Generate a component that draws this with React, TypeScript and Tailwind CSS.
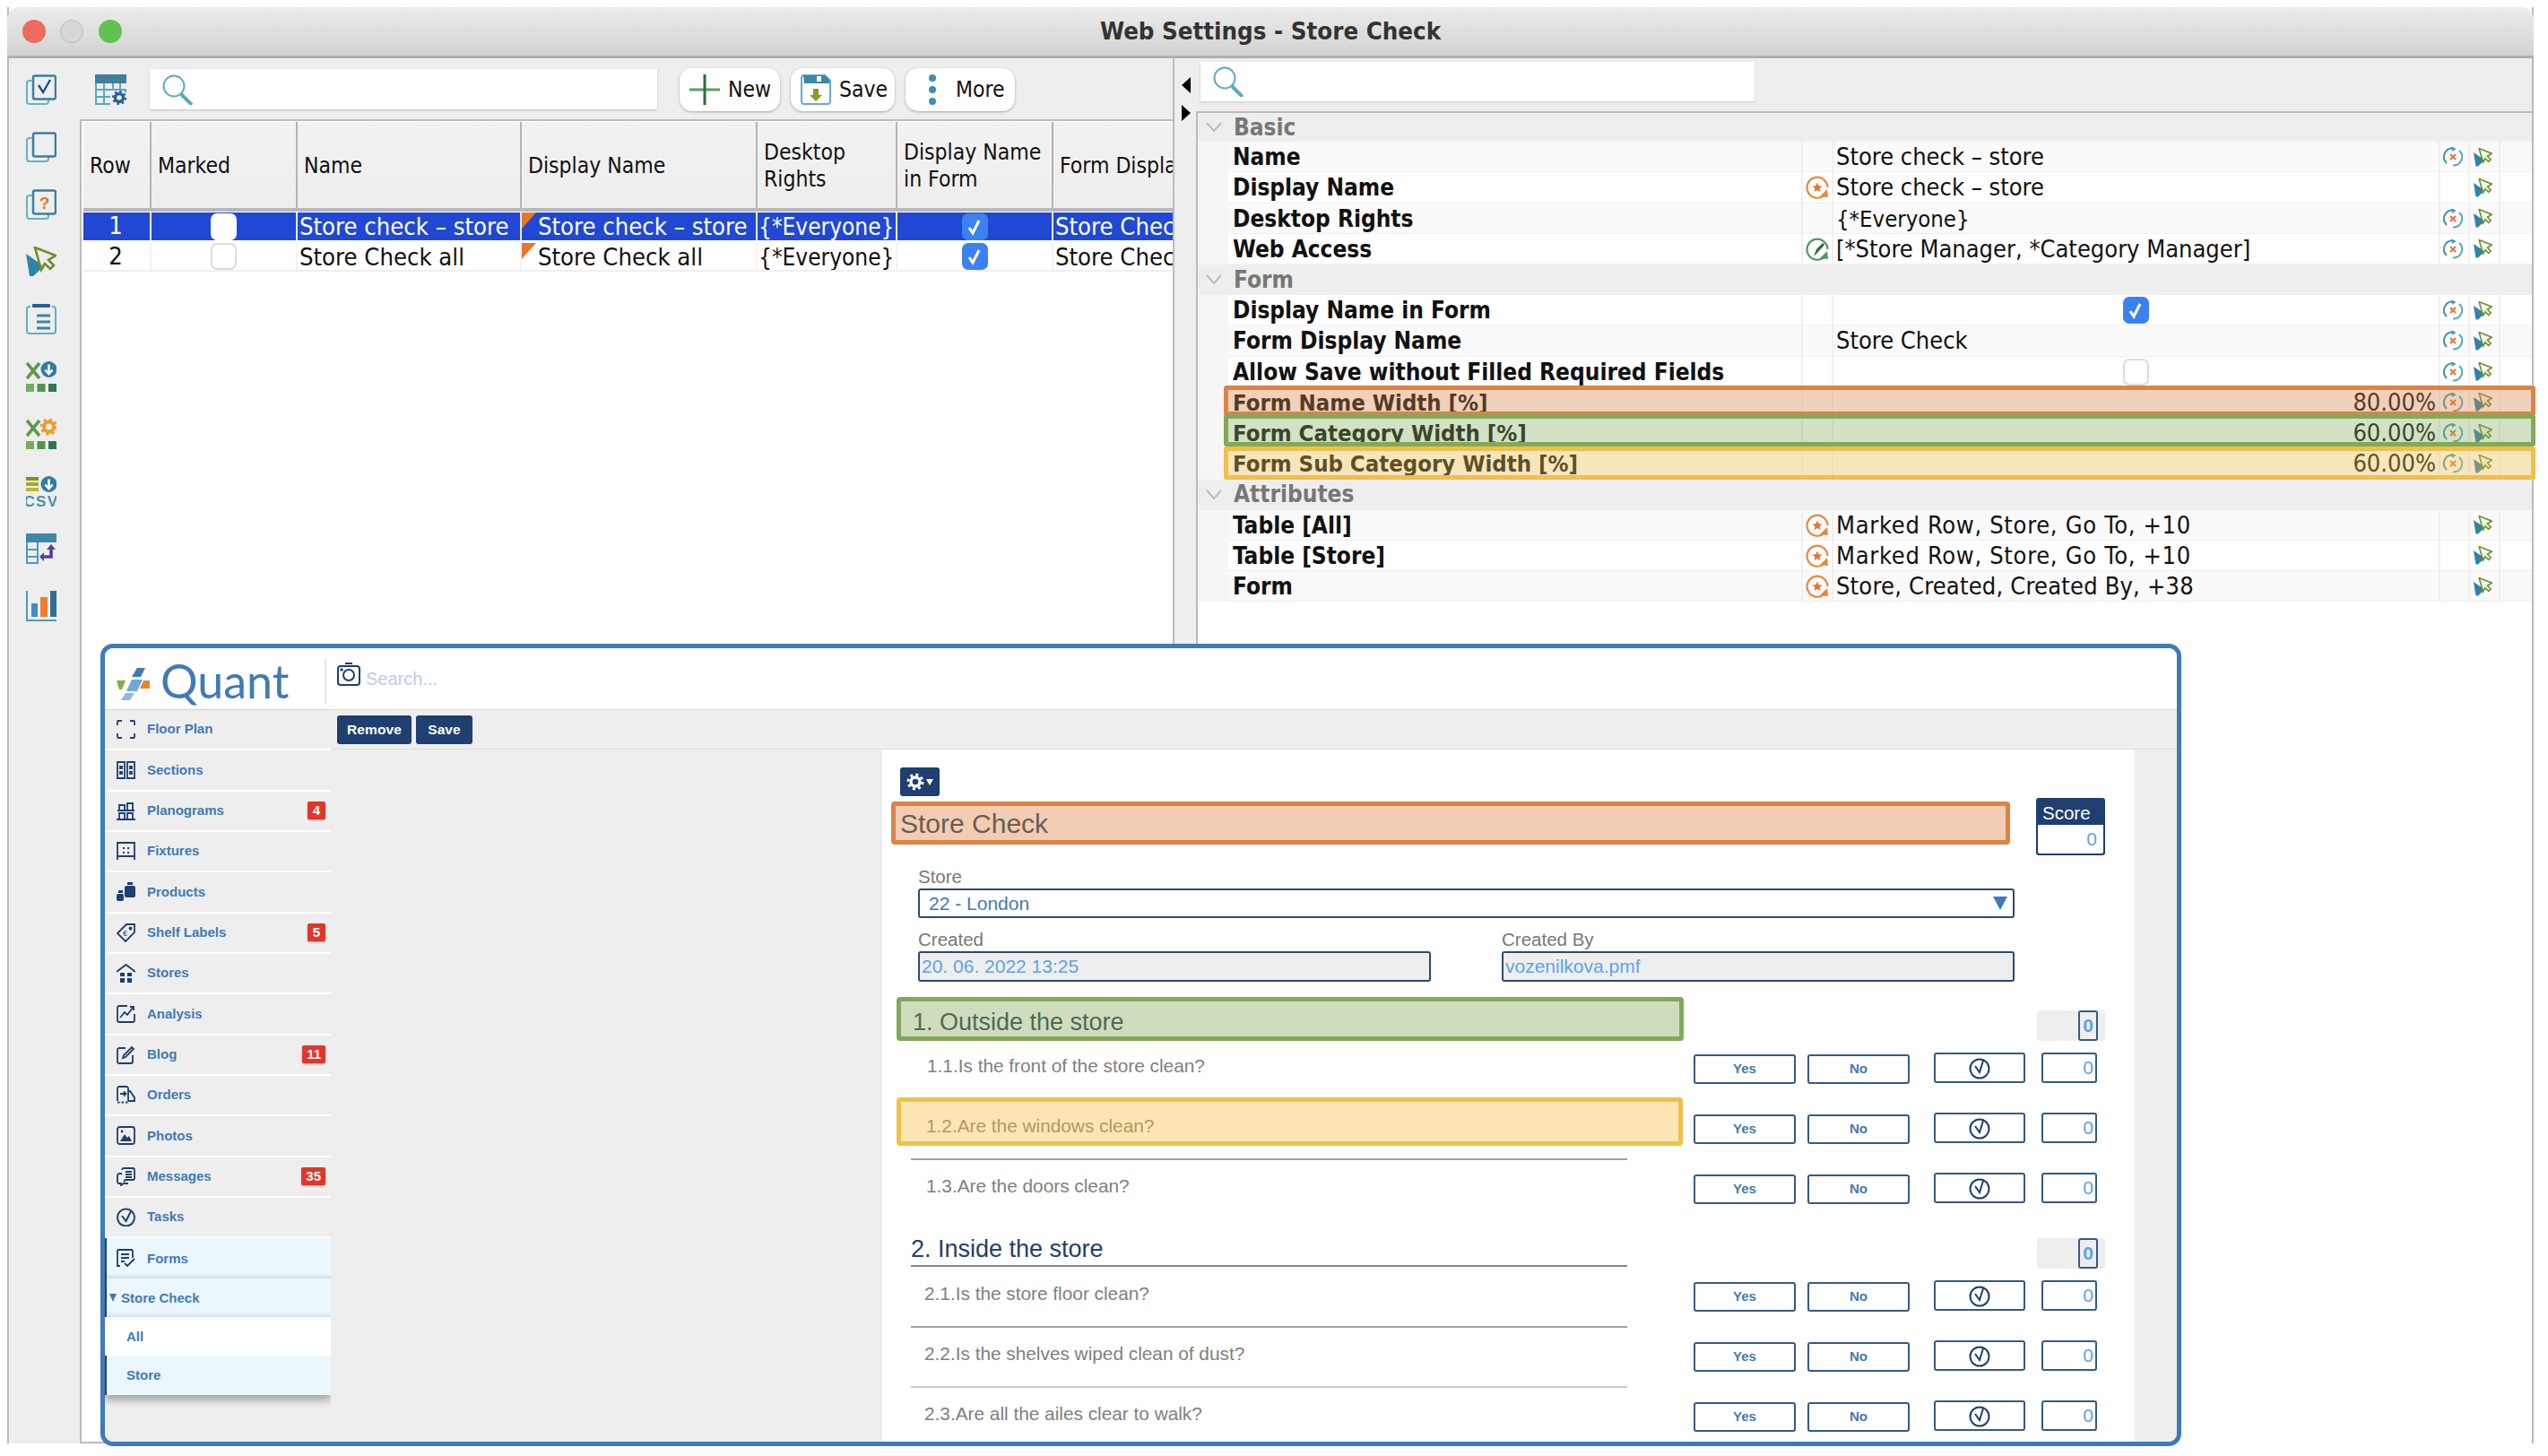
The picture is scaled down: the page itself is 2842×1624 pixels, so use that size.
import type { ReactNode } from "react";

const NAVY = "#1e3f6f";

function Stack({ children }: { children?: ReactNode }) {
  return (
    <svg width="34" height="34" viewBox="0 0 34 34" fill="none">
      <path d="M7 7H4a3 3 0 0 0-3 3v20a3 3 0 0 0 3 3h18a3 3 0 0 0 3-3v-2" stroke="#62b3c8" strokeWidth="2" />
      <rect x="8" y="1.5" width="25" height="26" rx="2" stroke="#3a7f9f" strokeWidth="2.5" />
      {children}
    </svg>
  );
}

function Cursor({ size = 34 }: { size?: number }) {
  return (
    <svg width={size} height={size} viewBox="0 0 34 34" fill="none">
      <polygon points="0,8 20,22 8,33 4,33" fill="#2f84a6" />
      <path d="M10 1L33 10L25 15L31 21L27 25L21 19L17 26Z" stroke="#6f8f2a" strokeWidth="2.6" fill="#eeeeee" fillOpacity="0.5" />
    </svg>
  );
}

function GreenX() {
  return (
    <g stroke="#5b9a50" strokeWidth="3.6">
      <line x1="1" y1="2" x2="15" y2="19" />
      <line x1="15" y1="2" x2="1" y2="19" />
    </g>
  );
}

function Squares() {
  return (
    <g>
      <rect x="0" y="25" width="9" height="9" fill="#73ad60" />
      <rect x="12.5" y="25" width="9" height="9" fill="#509452" />
      <rect x="25" y="25" width="9" height="9" fill="#2f7a48" />
    </g>
  );
}

function DownCircle() {
  return (
    <g>
      <circle cx="25.5" cy="9" r="9" fill="#2f7da6" />
      <path d="M25.5 3.5V13M21.5 9.5L25.5 14L29.5 9.5" stroke="#fff" strokeWidth="2.6" />
    </g>
  );
}

function RailIcons() {
  return (
    <>
      <Stack>
        <polyline points="14,12 19,20 27,6" stroke="#1f4f8f" strokeWidth="2.4" />
      </Stack>
      <Stack />
      <Stack>
        <text x="20.5" y="22" textAnchor="middle" fontSize="19" fontWeight="700" fill="#e6782c" fontFamily="Liberation Sans">?</text>
      </Stack>
      <Cursor />
      <svg width="34" height="34" viewBox="0 0 34 34" fill="none">
        <path d="M5 3H4a3 3 0 0 0-3 3v24a3 3 0 0 0 3 3h26a3 3 0 0 0 3-3V6a3 3 0 0 0-3-3h-1" stroke="#5fb0c6" strokeWidth="2" />
        <rect x="7" y="0" width="20" height="4" rx="1" fill="#2a5f92" />
        <path d="M12 13H27M12 20H27M12 27H27" stroke="#3b86a6" strokeWidth="3" />
      </svg>
      <svg width="34" height="34" viewBox="0 0 34 34">
        <GreenX />
        <DownCircle />
        <Squares />
      </svg>
      <svg width="34" height="34" viewBox="0 0 34 34" fill="none">
        <GreenX />
        <circle cx="25.5" cy="9" r="5.5" stroke="#ef9a2c" strokeWidth="4" />
        <circle cx="25.5" cy="9" r="8.4" stroke="#ef9a2c" strokeWidth="2.6" strokeDasharray="3.2 3.4" />
        <Squares />
      </svg>
      <svg width="34" height="34" viewBox="0 0 34 34">
        <rect x="0" y="1" width="14" height="4" fill="#7f8f1e" />
        <rect x="0" y="7" width="14" height="4" fill="#a3ad24" />
        <rect x="0" y="13" width="14" height="4" fill="#b5bb2c" />
        <DownCircle />
        <text x="17" y="33.5" textAnchor="middle" fontSize="17" fontWeight="700" letterSpacing="1.4" fill="#4a8fb0" fontFamily="Liberation Sans">CSV</text>
      </svg>
      <svg width="34" height="34" viewBox="0 0 34 34" fill="none">
        <rect x="0" y="0" width="34" height="10" fill="#3f86a8" />
        <path d="M1 10V33H13V10M1 18H13M1 26H13" stroke="#4f9ab8" strokeWidth="2" />
        <path d="M28 16V26H18" stroke="#5a3d9a" strokeWidth="3.6" />
        <path d="M23 18L28 12L33 18ZM20 21V31L15 26Z" fill="#5a3d9a" />
      </svg>
      <svg width="34" height="34" viewBox="0 0 34 34" fill="none">
        <path d="M1 0V33H34" stroke="#4f9ab8" strokeWidth="2" />
        <rect x="6" y="14" width="7" height="15" fill="#3f8fb8" />
        <rect x="16" y="7" width="8" height="22" fill="#ee7d2e" />
        <rect x="27" y="0" width="7" height="29" fill="#2f6f94" />
      </svg>
    </>
  );
}

function TableGear() {
  return (
    <svg width="35" height="34" viewBox="0 0 35 34" fill="none">
      <rect x="0" y="0" width="35" height="10" fill="#3f7f9f" />
      <path d="M1 10V33H17M1 17H34V20M1 25H17M10 10V33M20 10V17M28 10V17" stroke="#5aa9bf" strokeWidth="2" />
      <circle cx="27" cy="26" r="4.5" stroke="#2a5f92" strokeWidth="3.4" />
      <circle cx="27" cy="26" r="7" stroke="#2a5f92" strokeWidth="2.2" strokeDasharray="2.6 2.9" />
    </svg>
  );
}

function Search() {
  return (
    <svg width="34" height="34" viewBox="0 0 34 34" fill="none">
      <circle cx="13" cy="13" r="11.5" stroke="#5faac0" strokeWidth="2" />
      <line x1="21" y1="22" x2="33" y2="34" stroke="#5aa9bf" strokeWidth="4" />
    </svg>
  );
}

function Checkbox({ on, blend }: { on: boolean; blend?: boolean }) {
  if (on) {
    return (
      <span className="flex h-[30px] w-[29px] items-center justify-center rounded-[7px] bg-[#3b82f0]">
        <svg width="20" height="20" viewBox="0 0 20 20" fill="none">
          <polyline points="4,11 8,17 15,3" stroke="#fff" strokeWidth="3" />
        </svg>
      </span>
    );
  }
  return <span className={`block h-[30px] w-[29px] rounded-[7px] bg-white ${blend ? "" : "border-2 border-[#dcdcdc]"}`} />;
}

const COLS = "grid grid-cols-[76px_163px_250px_263px_156px_174px_133px]";

function HeadCell({ children }: { children: ReactNode }) {
  return (
    <div className="flex h-[96px] items-center overflow-hidden whitespace-nowrap border-r-2 border-[#b4b4b4] bg-gradient-to-b from-[#f2f2f2] to-[#eeeeee] pl-[7px] pt-[2px] text-[24.5px] leading-[30px] text-[#111] last:border-r-0">
      <div>{children}</div>
    </div>
  );
}

function Corner() {
  return <span className="absolute left-0 top-0 h-[18px] w-[16px] bg-[#e8752f] [clip-path:polygon(0_0,100%_0,0_100%)]" />;
}

function TableRow({ n, name, display, sel }: { n: number; name: string; display: string; sel: boolean }) {
  const cell = `flex items-center overflow-hidden whitespace-nowrap border-r-2 last:border-r-0 ${sel ? "border-[#e6e9f8]" : "border-[#f2f2f2]"}`;
  return (
    <div className={`${COLS} ${sel ? "h-[32px] border-b border-white bg-[#2148d4] text-white" : "h-[34px] border-b-2 border-[#efefef] pt-[2px] text-[#111]"} text-[27.2px]`}>
      <div className={`${cell} justify-center pr-[2px]`}>{n}</div>
      <div className={`${cell} justify-center`}>
        <Checkbox on={false} blend={sel} />
      </div>
      <div className={`${cell} pl-[2px] pt-[2px]`}>{name}</div>
      <div className={`${cell} relative pl-[18px] pt-[2px]`}>
        <Corner />
        {display}
      </div>
      <div className={`${cell} pl-[1px] pt-[2px] text-[26px]`}>{"{*Everyone}"}</div>
      <div className={`${cell} justify-center`}>
        <Checkbox on />
      </div>
      <div className={`${cell} pl-[2px] pt-[2px]`}>Store Check</div>
    </div>
  );
}

function ToolButton({ label, width, gap, icon }: { label: string; width: string; gap: string; icon: ReactNode }) {
  return (
    <button className={`flex h-[48px] items-center rounded-[14px] bg-white pl-[11px] text-[24.5px] text-[#111] shadow-[0_1px_3px_rgba(0,0,0,0.3)] ${width} ${gap}`}>
      {icon}
      {label}
    </button>
  );
}

function Reset() {
  return (
    <svg width="22" height="22" viewBox="0 0 22 22" fill="none">
      <path d="M4 18A9.5 9.5 0 0 1 11 1.5" stroke="#3f93b8" strokeWidth="2" />
      <path d="M18 4A9.5 9.5 0 0 1 11 20.5" stroke="#55a9c2" strokeWidth="2" />
      <path d="M8 8L14 14M14 8L8 14" stroke="#e8752f" strokeWidth="2" />
      <path d="M9 0L13 2L10 4" stroke="#3f93b8" strokeWidth="1.6" />
    </svg>
  );
}

function StarBadge() {
  return (
    <svg width="26" height="26" viewBox="0 0 26 26" fill="none">
      <path d="M21 21.5A11.5 11.5 0 1 1 24.5 13" stroke="#e8873f" strokeWidth="2.2" />
      <path d="M24 15L25 24L16 23Z" fill="#e8873f" />
      <path d="M13 7.5L14.6 11.2L18.5 11.6L15.6 14.2L16.4 18L13 16L9.6 18L10.4 14.2L7.5 11.6L11.4 11.2Z" fill="#e8752f" />
    </svg>
  );
}

function CheckBadge() {
  return (
    <svg width="26" height="26" viewBox="0 0 26 26" fill="none">
      <path d="M21 21.5A11.5 11.5 0 1 1 24.5 13" stroke="#4d9a5a" strokeWidth="2.2" />
      <path d="M9 21L12 13L19 6L21 8L14 16Z" fill="#2e6b3a" />
      <path d="M24 15L25 24L16 23Z" fill="#4d9a5a" />
    </svg>
  );
}

type Prop = {
  label: string;
  value?: string;
  badge?: "star" | "check";
  reset?: boolean;
  box?: boolean;
  right?: boolean;
  valueClass?: string;
};

function PropRow({ p, alt }: { p: Prop; alt: boolean }) {
  const cell = "flex h-full items-center border-l-2 border-[#f0f0f0] leading-[30px]";
  return (
    <div className={`grid h-[34.25px] grid-cols-[34px_639px_34px_677px_33px_34px_35px] grid-rows-[34.25px] border-b border-[#f0f0f0] ${alt ? "bg-[#fafafa]" : "bg-white"}`}>
      <div className="h-full bg-[#f6f6f6]" />
      <div className={`flex h-full items-center whitespace-nowrap pl-[5px] font-bold leading-[30px] text-[#111] ${p.right ? "text-[25.5px]" : "text-[26px]"}`}>{p.label}</div>
      <div className={`${cell} justify-center`}>
        {p.badge === "star" && <StarBadge />}
        {p.badge === "check" && <CheckBadge />}
      </div>
      <div className={`${cell} whitespace-nowrap px-[3px] text-[#111] ${p.right ? "justify-end" : ""} ${p.box ? "justify-center pr-[4px]" : ""} ${p.valueClass ?? "text-[27px]"}`}>
        {p.box ? <Checkbox on={p.value === "on"} /> : p.value}
      </div>
      <div className={`${cell} justify-center pr-[3px]`}>{p.reset && <Reset />}</div>
      <div className={`${cell} justify-center pr-[3px]`}>
        <Cursor size={21} />
      </div>
      <div className={cell} />
    </div>
  );
}

function Group({ label, first }: { label: string; first?: boolean }) {
  return (
    <div className={`flex items-center bg-[#eeeeee] pl-[9px] text-[26px] font-bold text-[#777] ${first ? "h-[32px]" : "h-[34px]"}`}>
      <svg width="18" height="12" viewBox="0 0 18 12" fill="none" className="mr-[13px]">
        <path d="M1 1L9 10L17 1" stroke="#bbbbbb" strokeWidth="2" />
      </svg>
      {label}
    </div>
  );
}

const BASIC: Prop[] = [
  { label: "Name", value: "Store check – store", reset: true },
  { label: "Display Name", value: "Store check – store", badge: "star" },
  { label: "Desktop Rights", value: "{*Everyone}", reset: true, valueClass: "text-[25.5px]" },
  { label: "Web Access", value: "[*Store Manager, *Category Manager]", badge: "check", reset: true },
];

const FORM: Prop[] = [
  { label: "Display Name in Form", value: "on", box: true, reset: true },
  { label: "Form Display Name", value: "Store Check", reset: true },
  { label: "Allow Save without Filled Required Fields", value: "off", box: true, reset: true },
  { label: "Form Name Width [%]", value: "80.00%", right: true, reset: true },
  { label: "Form Category Width [%]", value: "60.00%", right: true, reset: true },
  { label: "Form Sub Category Width [%]", value: "60.00%", right: true, reset: true },
];

const ATTRS: Prop[] = [
  { label: "Table [All]", value: "Marked Row, Store, Go To, +10", badge: "star", valueClass: "text-[27px] tracking-[0.7px]" },
  { label: "Table [Store]", value: "Marked Row, Store, Go To, +10", badge: "star", valueClass: "text-[27px] tracking-[0.7px]" },
  { label: "Form", value: "Store, Created, Created By, +38", badge: "star", valueClass: "text-[27px] tracking-[0.2px]" },
];

function NavIcon({ children }: { children: ReactNode }) {
  return (
    <svg width="21" height="21" viewBox="0 0 21 21" fill="none" stroke={NAVY} strokeWidth="1.8" className="shrink-0">
      {children}
    </svg>
  );
}

type NavItem = { label: string; icon: ReactNode; badge?: string };

const NAV: NavItem[] = [
  {
    label: "Floor Plan",
    icon: <path d="M1 6V2a1 1 0 0 1 1-1h4M15 1h4a1 1 0 0 1 1 1v4M1 15v4a1 1 0 0 0 1 1h4M15 20h4a1 1 0 0 0 1-1v-4" />,
  },
  {
    label: "Sections",
    icon: <path d="M1 20V2h8v18M12 20V2h8v18M0 20h10M11 20h10M4 7h2v2H4zM15 7h2v2h-2zM4 13h2v2H4zM15 13h2v2h-2z" />,
  },
  {
    label: "Planograms",
    badge: "4",
    icon: <path d="M3 9V4h6v5M12 9V2h6v7M1 10h19M3 19v-6h6v6M12 19v-6h6v6M0 20h21" />,
  },
  {
    label: "Fixtures",
    icon: (
      <>
        <path d="M1 20V1h19v19M1 16h19" />
        <path d="M7 6h2v2H7zM12 6h2v2h-2zM7 11h2v2H7zM12 11h2v2h-2z" fill={NAVY} stroke="none" />
      </>
    ),
  },
  {
    label: "Products",
    icon: (
      <g fill={NAVY} stroke="none">
        <rect x="12" y="0" width="6" height="3" />
        <rect x="9" y="4" width="12" height="13" rx="2" />
        <rect x="2" y="9" width="5" height="3" />
        <rect x="0" y="13" width="8" height="8" rx="2" />
      </g>
    ),
  },
  {
    label: "Shelf Labels",
    badge: "5",
    icon: (
      <>
        <path d="M1 11L11 1h9v9L10 20Z" />
        <circle cx="15.5" cy="5.5" r="1" />
        <text x="7" y="14" fontSize="9" fill={NAVY} stroke="none" fontFamily="Liberation Sans">€</text>
      </>
    ),
  },
  {
    label: "Stores",
    icon: (
      <>
        <path d="M0 9L10.5 1L21 9" />
        <path d="M4 10h5v4H4zM12 10h5v4h-5zM4 16h5v5H4zM12 16h5v5h-5z" fill={NAVY} stroke="none" />
      </>
    ),
  },
  {
    label: "Analysis",
    icon: (
      <>
        <path d="M12 2H3a2 2 0 0 0-2 2v14a2 2 0 0 0 2 2h15a2 2 0 0 0 2-2v-7" />
        <path d="M4 15L9 9L12 12L18 4M15 3h4v4" />
      </>
    ),
  },
  {
    label: "Blog",
    badge: "11",
    icon: (
      <>
        <path d="M10 3H3a2 2 0 0 0-2 2v13a2 2 0 0 0 2 2h13a2 2 0 0 0 2-2v-7" />
        <path d="M7 14L8 11L17 2L19 4L10 13Z" />
      </>
    ),
  },
  {
    label: "Orders",
    icon: (
      <>
        <path d="M13 17V3a2 2 0 0 0-2-2H3a2 2 0 0 0-2 2v14M13 6h2l5 7v4h-7" />
        <path d="M4 9h6M8 6.5L10.5 9L8 11.5" />
        <path d="M1 18.5h12" strokeDasharray="2.5 2" />
      </>
    ),
  },
  {
    label: "Photos",
    icon: (
      <>
        <rect x="1" y="1" width="19" height="19" rx="2.5" />
        <path d="M4 17L9 9L12 13L14 11L17 17Z" fill={NAVY} stroke="none" />
        <circle cx="6" cy="6" r="1.4" fill={NAVY} stroke="none" />
      </>
    ),
  },
  {
    label: "Messages",
    badge: "35",
    icon: (
      <>
        <path d="M6 3a2 2 0 0 1 2-2h10a2 2 0 0 1 2 2v9a2 2 0 0 1-2 2h-8l-2 2" />
        <path d="M6 7H3a2 2 0 0 0-2 2v7a2 2 0 0 0 2 2h2v2l3-2h5" />
        <path d="M10 5h7M10 8h7M10 11h7" />
      </>
    ),
  },
  {
    label: "Tasks",
    icon: (
      <>
        <circle cx="10.5" cy="11" r="9.5" strokeWidth="2" />
        <path d="M6 9L10.5 15L16 4" strokeWidth="2" />
      </>
    ),
  },
];

function NavRow({ item }: { item: NavItem }) {
  return (
    <div className="flex h-[45.33px] items-center border-b-2 border-white pl-[13px] pr-[6px]">
      <NavIcon>{item.icon}</NavIcon>
      <span className="ml-[13px] text-[15px] font-bold text-[#3f7ab8]">{item.label}</span>
      {item.badge && (
        <span className="ml-auto flex h-[20px] min-w-[20px] items-center justify-center rounded-[2px] bg-[#e3352b] px-[5px] text-[15px] font-bold text-white shadow-[0_1px_2px_rgba(0,0,0,0.3)]">
          {item.badge}
        </span>
      )}
    </div>
  );
}

function Sidebar() {
  return (
    <aside className="w-[252px] shrink-0 bg-[#eeeeee] shadow-[1px_0_3px_rgba(0,0,0,0.12)]">
      {NAV.map((item) => (
        <NavRow key={item.label} item={item} />
      ))}
      <div className="shadow-[0_6px_8px_rgba(0,0,0,0.3)]">
        <div className="flex h-[45px] items-center border-l-2 border-[#1e3f6f] bg-[#ebf6fd] pl-[11px] shadow-[inset_0_-6px_5px_-4px_rgba(0,0,0,0.12)]">
          <NavIcon>
            <path d="M4 19H1V2a1 1 0 0 1 1-1h14a2 2 0 0 1 2 2v7M5 6h9M5 10h9M5 14h4M9 16L12 19L20 11" />
          </NavIcon>
          <span className="ml-[13px] text-[15px] font-bold text-[#3f7ab8]">Forms</span>
        </div>
        <div className="flex h-[43px] items-center border-l-2 border-[#1e3f6f] bg-[#ebf6fd] pl-[3px] text-[15px] font-bold text-[#3f7ab8] shadow-[inset_0_-6px_5px_-4px_rgba(0,0,0,0.12)]">
          <span className="mr-[5px] h-0 w-0 border-x-[4px] border-t-[9px] border-x-transparent border-t-[#3f7ab8]" />
          Store Check
        </div>
        <div className="flex h-[43px] items-center bg-white pl-[24px] text-[15px] font-bold text-[#3f7ab8]">All</div>
        <div className="flex h-[44px] items-center border-l-2 border-[#1e3f6f] bg-[#ebf6fd] pl-[22px] text-[15px] font-bold text-[#3f7ab8]">Store</div>
      </div>
    </aside>
  );
}

function CheckRound() {
  return (
    <svg width="24" height="25" viewBox="0 0 24 25" fill="none" stroke={NAVY} strokeWidth="2">
      <circle cx="12" cy="13" r="10.5" />
      <path d="M7 10L12 17L16 4" />
    </svg>
  );
}

function Controls() {
  const box = "flex items-center justify-center rounded-[3px] border-2 border-[#345a86] bg-white";
  const word = `${box} mt-[15px] h-[33px] w-[114px] text-[15px] font-bold text-[#3f7ab8]`;
  return (
    <div className="flex items-start">
      <div className={`${word} ml-[11px]`}>Yes</div>
      <div className={`${word} ml-[13px]`}>No</div>
      <div className={`${box} ml-[27px] mt-[13px] h-[34px] w-[102px]`}>
        <CheckRound />
      </div>
      <div className={`${box} ml-[18px] mt-[13px] h-[34px] w-[62px] justify-end pr-[2px] text-[21px] text-[#5ca3e8]`}>0</div>
    </div>
  );
}

function Question({ text, indent, line, thick }: { text: string; indent: string; line?: boolean; thick?: boolean }) {
  return (
    <div className="flex h-[67px]">
      <div className="flex w-[894px] flex-col">
        <div className={`mt-[16px] text-[20.8px] leading-[24px] text-[#808080] ${indent}`}>{text}</div>
        {line && <div className={`mb-[1px] ml-[32px] mt-auto h-[2px] w-[799px] ${thick ? "bg-[#cccccc]" : "bg-[#a0a0a0]"}`} />}
      </div>
      <Controls />
    </div>
  );
}

function Total() {
  return (
    <div className="flex h-[34px] w-[76px] justify-end rounded-[3px] bg-[#eeeeee] pr-[8px]">
      <span className="flex h-full w-[22px] items-center justify-center rounded-[3px] border-2 border-[#345a86] text-[21px] font-bold text-[#5ca3e8]">0</span>
    </div>
  );
}

function Field({ label, value, className }: { label: string; value: string; className: string }) {
  return (
    <div className={className}>
      <div className="h-[20px] text-[20.5px] leading-[20px] text-[#777]">{label}</div>
      <div className="mt-[3px] flex h-[34px] items-center rounded-[3px] border-2 border-[#2a4a75] bg-[#eeeeee] pl-[2px] text-[21px] text-[#5ca3e8]">{value}</div>
    </div>
  );
}

function StoreForm() {
  return (
    <div className="h-[773px] w-[1397px] overflow-hidden bg-white pt-[20px]">
      <div className="ml-[20px] flex h-[32px] w-[44px] items-center justify-center gap-[2px] rounded-[3px] bg-[#1e3f6f]">
        <svg width="20" height="20" viewBox="0 0 20 20" fill="none">
          <circle cx="10" cy="10" r="5" stroke="#fff" strokeWidth="3.4" />
          <circle cx="10" cy="10" r="8" stroke="#fff" strokeWidth="3" strokeDasharray="3 3.3" />
        </svg>
        <span className="h-0 w-0 border-x-[4px] border-t-[7px] border-x-transparent border-t-white" />
      </div>
      <div className="ml-[10px] mt-[2px] flex items-start">
        <div className="mt-[4px] flex h-[48px] w-[1248px] items-center rounded-[4px] border-[5px] border-[#dd8345] bg-[#f2cdb4] pl-[5px] text-[30px] text-[#6b5d55]">Store Check</div>
        <div className="ml-[29px] h-[64px] w-[77px] overflow-hidden rounded-[3px] bg-[#1e3f6f]">
          <div className="flex h-[30px] items-center pl-[7px] pt-[4px] text-[20.5px] text-white">Score</div>
          <div className="mx-[2px] flex h-[32px] items-center justify-end rounded-b-[2px] bg-white pr-[7px] text-[21px] text-[#5ca3e8]">0</div>
        </div>
      </div>
      <div className="ml-[40px] mt-[14px] w-[1223px]">
        <div className="h-[20px] text-[20.5px] leading-[20px] text-[#777]">Store</div>
        <div className="mt-[3px] flex h-[33px] items-center justify-between rounded-[3px] border-2 border-[#2a4a75] bg-white pl-[10px] pr-[6px] text-[21px] text-[#3f7ab8]">
          22 - London
          <span className="h-0 w-0 border-x-[8px] border-t-[15px] border-x-transparent border-t-[#3f7ab8]" />
        </div>
        <div className="mt-[14px] flex justify-between">
          <Field label="Created" value="20. 06. 2022 13:25" className="w-[572px]" />
          <Field label="Created By" value="vozenilkova.pmf" className="w-[572px]" />
        </div>
      </div>
      <div className="mt-[17px] flex h-[49px] items-end">
        <div className="ml-[16px] flex h-[49px] w-[878px] items-center rounded-[4px] border-[5px] border-[#82a95a] bg-[#d0ddbc] pl-[13px] pt-[8px] text-[27px] text-[#4d6a55]">1. Outside the store</div>
        <div className="ml-[394px]">
          <Total />
        </div>
      </div>
      <Question text="1.1.Is the front of the store clean?" indent="ml-[50px]" />
      <div className="flex h-[67px]">
        <div className="flex w-[894px] flex-col">
          <div className="-mt-[4px] ml-[16px] flex h-[54px] w-[877px] shrink-0 items-start rounded-[4px] border-[5px] border-[#f0c04a] bg-[#fce6b4] pl-[28px] pt-[15px] text-[20.8px] leading-[24px] text-[#b09a5e]">1.2.Are the windows clean?</div>
          <div className="mb-[1px] ml-[32px] mt-auto h-[2px] w-[799px] bg-[#a0a0a0]" />
        </div>
        <Controls />
      </div>
      <Question text="1.3.Are the doors clean?" indent="ml-[49px]" />
      <div className="flex h-[53px] items-end">
        <div className="w-[894px] pb-[2px]">
          <div className="ml-[32px] w-[799px] border-b-2 border-[#888] pb-[2px] text-[27px] leading-[32px] text-[#1e3f6f]">2. Inside the store</div>
        </div>
        <div className="ml-[394px]">
          <Total />
        </div>
      </div>
      <Question text="2.1.Is the store floor clean?" indent="ml-[47px]" line />
      <Question text="2.2.Is the shelves wiped clean of dust?" indent="ml-[47px]" line thick />
      <Question text="2.3.Are all the ailes clear to walk?" indent="ml-[47px]" />
    </div>
  );
}

function QuantWindow() {
  return (
    <div className="absolute left-[112px] top-[718px] flex h-[895px] w-[2321px] flex-col overflow-hidden rounded-[14px] border-[5px] border-[#3f7ab8] bg-white font-[Liberation_Sans,sans-serif] [font-stretch:normal]">
      <header className="flex h-[69px] shrink-0 border-b border-[#dddddd] bg-white">
        <div className="flex w-[245px] items-center pl-[13px]">
          <svg width="37" height="37" viewBox="0 0 37 37" className="mt-[10px]">
            <polygon points="23,1 32,1 27,11 17,11" fill="#3f7ab8" />
            <polygon points="17,14 29,14 23,27 11,27" fill="#6ea8dc" />
            <polygon points="10,29 20,29 15,37 5,37" fill="#8db9e6" />
            <polygon points="0,15 10,15 6,25 3,25" fill="#7fb23d" />
            <polygon points="30,15 37,15 37,24 26,24" fill="#e8852e" />
          </svg>
          <span className="ml-[12px] mt-[4px] text-[52px] leading-none text-[#3f7ab8] [font-family:Lato,sans-serif]">Quant</span>
        </div>
        <div className="mt-[12px] h-[50px] w-[2px] bg-[#e8e8e8]" />
        <div className="ml-[12px] mt-[15px] flex h-[28px] items-center">
          <svg width="26" height="26" viewBox="0 0 26 26" fill="none" stroke={NAVY} strokeWidth="2">
            <rect x="1" y="4" width="24" height="21" rx="3" />
            <circle cx="13" cy="14" r="6" />
            <path d="M9 1h8" />
            <circle cx="5" cy="8" r="0.8" />
          </svg>
          <span className="ml-[6px] mt-[10px] text-[20px] text-[#b9cde6]">Search...</span>
        </div>
      </header>
      <div className="flex min-h-0 flex-1">
        <Sidebar />
        <div className="flex-1 bg-[#eeeeee]">
          <div className="flex h-[44px] items-center gap-[5px] border-b border-[#dddddd] pl-[7px]">
            <button className="h-[32px] w-[83px] rounded-[3px] bg-[#1e3f6f] text-[15.5px] font-bold tracking-[0.1px] text-white">Remove</button>
            <button className="h-[32px] w-[63px] rounded-[3px] bg-[#1e3f6f] text-[15.5px] font-bold tracking-[0.1px] text-white">Save</button>
          </div>
          <div className="ml-[615px]">
            <StoreForm />
          </div>
        </div>
      </div>
    </div>
  );
}

export default function App() {
  return (
    <div className="relative h-[1624px] w-[2842px] overflow-hidden bg-white [font-family:DejaVu_Sans,sans-serif] [font-stretch:condensed]">
      <div className="ml-[8px] mt-[8px] flex h-[1602px] w-[2818px] flex-col border-x-2 border-[#bbbbbb]">
        <div className="-mx-[2px] flex h-[57px] shrink-0 items-center rounded-tl-[14px] rounded-tr-[14px] border-b-[3px] border-[#b0b0b0] bg-gradient-to-b from-[#ececec] to-[#d2d2d2] pl-[17px]">
          <span className="h-[26px] w-[26px] rounded-full bg-[#ed6a5e]" />
          <span className="ml-[16px] h-[26px] w-[26px] rounded-full border border-[#bbbbbb] bg-[#d8d8d8]" />
          <span className="ml-[17px] h-[26px] w-[26px] rounded-full bg-[#5fc24f]" />
          <div className="flex-1 pr-[128px] text-center text-[27.4px] font-bold text-[#333]">Web Settings - Store Check</div>
        </div>
        <div className="flex min-h-0 flex-1 bg-[#eeeeee]">
          <div className="flex w-[79px] shrink-0 flex-col gap-[30px] pl-[19px] pt-[18px]">
            <RailIcons />
          </div>
          <div className="flex w-[1219px] shrink-0 flex-col">
            <div className="flex h-[68px] shrink-0 items-start pl-[17px] pt-[11px]">
              <div className="mt-[7px]">
                <TableGear />
              </div>
              <div className="ml-[26px] mt-[1px] flex h-[45px] w-[566px] items-center bg-white pl-[14px] shadow-[0_1px_2px_rgba(0,0,0,0.2)]">
                <Search />
              </div>
              <div className="ml-[25px] flex gap-[12px]">
                <ToolButton
                  label="New"
                  width="w-[112px]"
                  gap="gap-[9px]"
                  icon={
                    <svg width="34" height="34" viewBox="0 0 34 34">
                      <rect x="0" y="15.5" width="34" height="3" fill="#5f9a62" />
                      <rect x="15.5" y="0" width="3" height="34" fill="#2e6b3a" />
                    </svg>
                  }
                />
                <ToolButton
                  label="Save"
                  width="w-[116px]"
                  gap="gap-[9px]"
                  icon={
                    <svg width="34" height="34" viewBox="0 0 34 34" fill="none">
                      <path d="M3 1H27L33 7V30a3 3 0 0 1-3 3H4a3 3 0 0 1-3-3V4a3 3 0 0 1 2-3Z" stroke="#5fb0c6" strokeWidth="2" />
                      <path d="M3 1H27L32 6V10H4Z" fill="#3f86a8" />
                      <rect x="18" y="2" width="5" height="6" fill="#fff" />
                      <path d="M14 16h6v7h4l-7 7-7-7h4Z" fill="#8f9a24" />
                    </svg>
                  }
                />
                <ToolButton
                  label="More"
                  width="w-[122px]"
                  gap="gap-[22px]"
                  icon={
                    <svg width="8" height="34" viewBox="0 0 8 34" className="ml-[15px]" fill="#3f8db0">
                      <circle cx="4" cy="4" r="4" />
                      <circle cx="4" cy="17" r="4" />
                      <circle cx="4" cy="30" r="4" />
                    </svg>
                  }
                />
              </div>
            </div>
            <div className="min-h-0 flex-1 border-2 border-r-0 border-[#bbbbbb] bg-white pl-[2px] pt-[1px]">
              <div className={`${COLS} border-b-[4px] border-[#b8b8b8]`}>
                <HeadCell>Row</HeadCell>
                <HeadCell>Marked</HeadCell>
                <HeadCell>Name</HeadCell>
                <HeadCell>Display Name</HeadCell>
                <HeadCell>
                  Desktop
                  <br />
                  Rights
                </HeadCell>
                <HeadCell>
                  Display Name
                  <br />
                  in Form
                </HeadCell>
                <HeadCell>Form Display Name</HeadCell>
              </div>
              <div className="pt-[1px]">
                <TableRow n={1} name="Store check – store" display="Store check – store" sel />
                <TableRow n={2} name="Store Check all" display="Store Check all" sel={false} />
              </div>
            </div>
          </div>
          <div className="flex w-[26px] shrink-0 flex-col items-center gap-[13px] border-l-2 border-[#bbbbbb] pl-[2px] pt-[21px]">
            <span className="h-0 w-0 border-y-[9px] border-r-[10px] border-y-transparent border-r-black" />
            <span className="h-0 w-0 border-y-[9px] border-l-[10px] border-y-transparent border-l-black" />
          </div>
          <div className="flex min-w-0 flex-1 flex-col">
            <div className="h-[59px] shrink-0 pl-[5px] pt-[4px]">
              <div className="flex h-[44px] w-[618px] items-center bg-white pl-[14px] shadow-[0_1px_2px_rgba(0,0,0,0.15)]">
                <Search />
              </div>
            </div>
            <div className="min-h-0 flex-1 border-l-2 border-t-2 border-[#bbbbbb] bg-white">
              <Group label="Basic" first />
              {BASIC.map((p, i) => (
                <PropRow key={p.label} p={p} alt={i % 2 === 0} />
              ))}
              <Group label="Form" />
              {FORM.map((p, i) => (
                <PropRow key={p.label} p={p} alt={i % 2 === 1} />
              ))}
              <Group label="Attributes" />
              {ATTRS.map((p, i) => (
                <PropRow key={p.label} p={p} alt={i % 2 === 0} />
              ))}
            </div>
          </div>
        </div>
      </div>

      <div className="absolute left-[1365px] top-[430px] h-[34px] w-[1463px] rounded-[3px] border-[5px] border-[#dd8345] bg-[#dd8345]/35" />
      <div className="absolute left-[1365px] top-[462px] h-[36px] w-[1463px] rounded-[3px] border-[5px] border-[#82a95a] bg-[#82a95a]/35" />
      <div className="absolute left-[1365px] top-[498px] h-[37px] w-[1463px] rounded-[3px] border-[5px] border-[#f0c04a] bg-[#f0c04a]/35" />

      <QuantWindow />
    </div>
  );
}
